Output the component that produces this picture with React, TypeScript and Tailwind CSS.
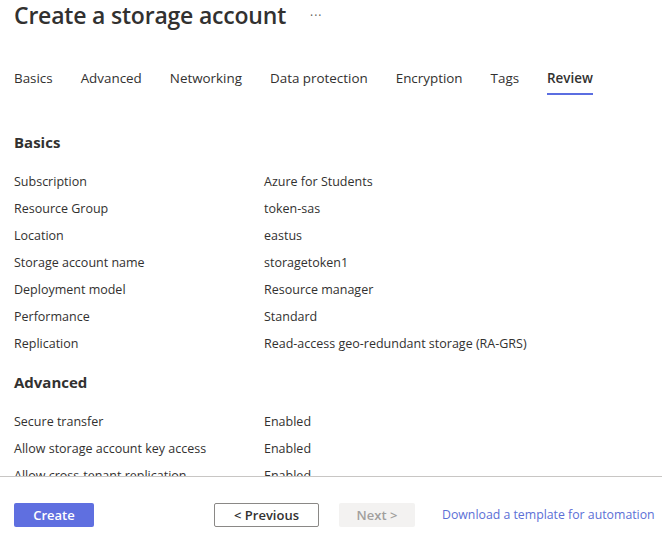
import React from "react";

const font = { fontFamily: '"Open Sans", "Noto Sans", sans-serif' };

const tabs = ["Basics", "Advanced", "Networking", "Data protection", "Encryption", "Tags", "Review"];

const basics: [string, string][] = [
  ["Subscription", "Azure for Students"],
  ["Resource Group", "token-sas"],
  ["Location", "eastus"],
  ["Storage account name", "storagetoken1"],
  ["Deployment model", "Resource manager"],
  ["Performance", "Standard"],
  ["Replication", "Read-access geo-redundant storage (RA-GRS)"],
];

const advanced: [string, string][] = [
  ["Secure transfer", "Enabled"],
  ["Allow storage account key access", "Enabled"],
  ["Allow cross-tenant replication", "Enabled"],
];

function Row({ label, value }: { label: string; value: string }) {
  return (
    <div className="flex h-[27px] items-center text-[12.5px] text-[#323130] whitespace-nowrap">
      <div className="w-[250px] shrink-0">{label}</div>
      <div>{value}</div>
    </div>
  );
}

export default function App() {
  return (
    <div className="w-[662px] h-[553px] bg-white overflow-hidden flex flex-col" style={font}>
      <div className="flex items-center pl-[14px] h-[33px] shrink-0">
        <h1 className="text-[23px] font-semibold text-[#323130] tracking-[-0.2px] leading-none -mt-[3px]">Create a storage account</h1>
        <span className="ml-[24px] text-[#605e5c] text-[12px] tracking-[1px] -mt-[2px]">···</span>
      </div>
      <div className="flex gap-[28px] pl-[14px] mt-[29px] text-[13.4px] text-[#323130] shrink-0">
        {tabs.map((t) => (
          <div key={t} className="relative h-[33px] flex items-center">
            <span className={t === "Review" ? "font-semibold" : ""}>{t}</span>
            {t === "Review" && (
              <div className="absolute left-0 right-0 bottom-0 h-[2px] bg-[#5b6ee1]" />
            )}
          </div>
        ))}
      </div>
      <div className="flex-1 overflow-hidden pl-[14px] pt-[37px] border-b border-[#c8c6c4]">
        <h2 className="text-[15px] font-bold text-[#323130] h-[20px] leading-[20px]">Basics</h2>
        <div className="mt-[17px]">
          {basics.map(([l, v]) => (
            <Row key={l} label={l} value={v} />
          ))}
        </div>
        <h2 className="text-[15px] font-bold text-[#323130] h-[20px] leading-[20px] mt-[14px]">Advanced</h2>
        <div className="mt-[17px]">
          {advanced.map(([l, v]) => (
            <Row key={l} label={l} value={v} />
          ))}
        </div>
      </div>
      <div className="h-[76px] shrink-0 flex items-start pt-[26px] pl-[14px] text-[13px] whitespace-nowrap">
        <button className="shrink-0 w-[80px] h-[24px] bg-[#5f6fe0] text-white font-semibold rounded-[2px] leading-none">Create</button>
        <button className="shrink-0 ml-[120px] w-[105px] h-[24px] border border-[#8a8886] text-[#323130] font-semibold rounded-[2px] leading-none">&lt; Previous</button>
        <button className="shrink-0 ml-[20px] w-[76px] h-[24px] bg-[#f3f2f1] text-[#a19f9d] font-semibold rounded-[2px] leading-none">Next &gt;</button>
        <a className="shrink-0 ml-[27px] h-[24px] flex items-center text-[12.3px] text-[#5c6fd6]">Download a template for automation</a>
      </div>
    </div>
  );
}
